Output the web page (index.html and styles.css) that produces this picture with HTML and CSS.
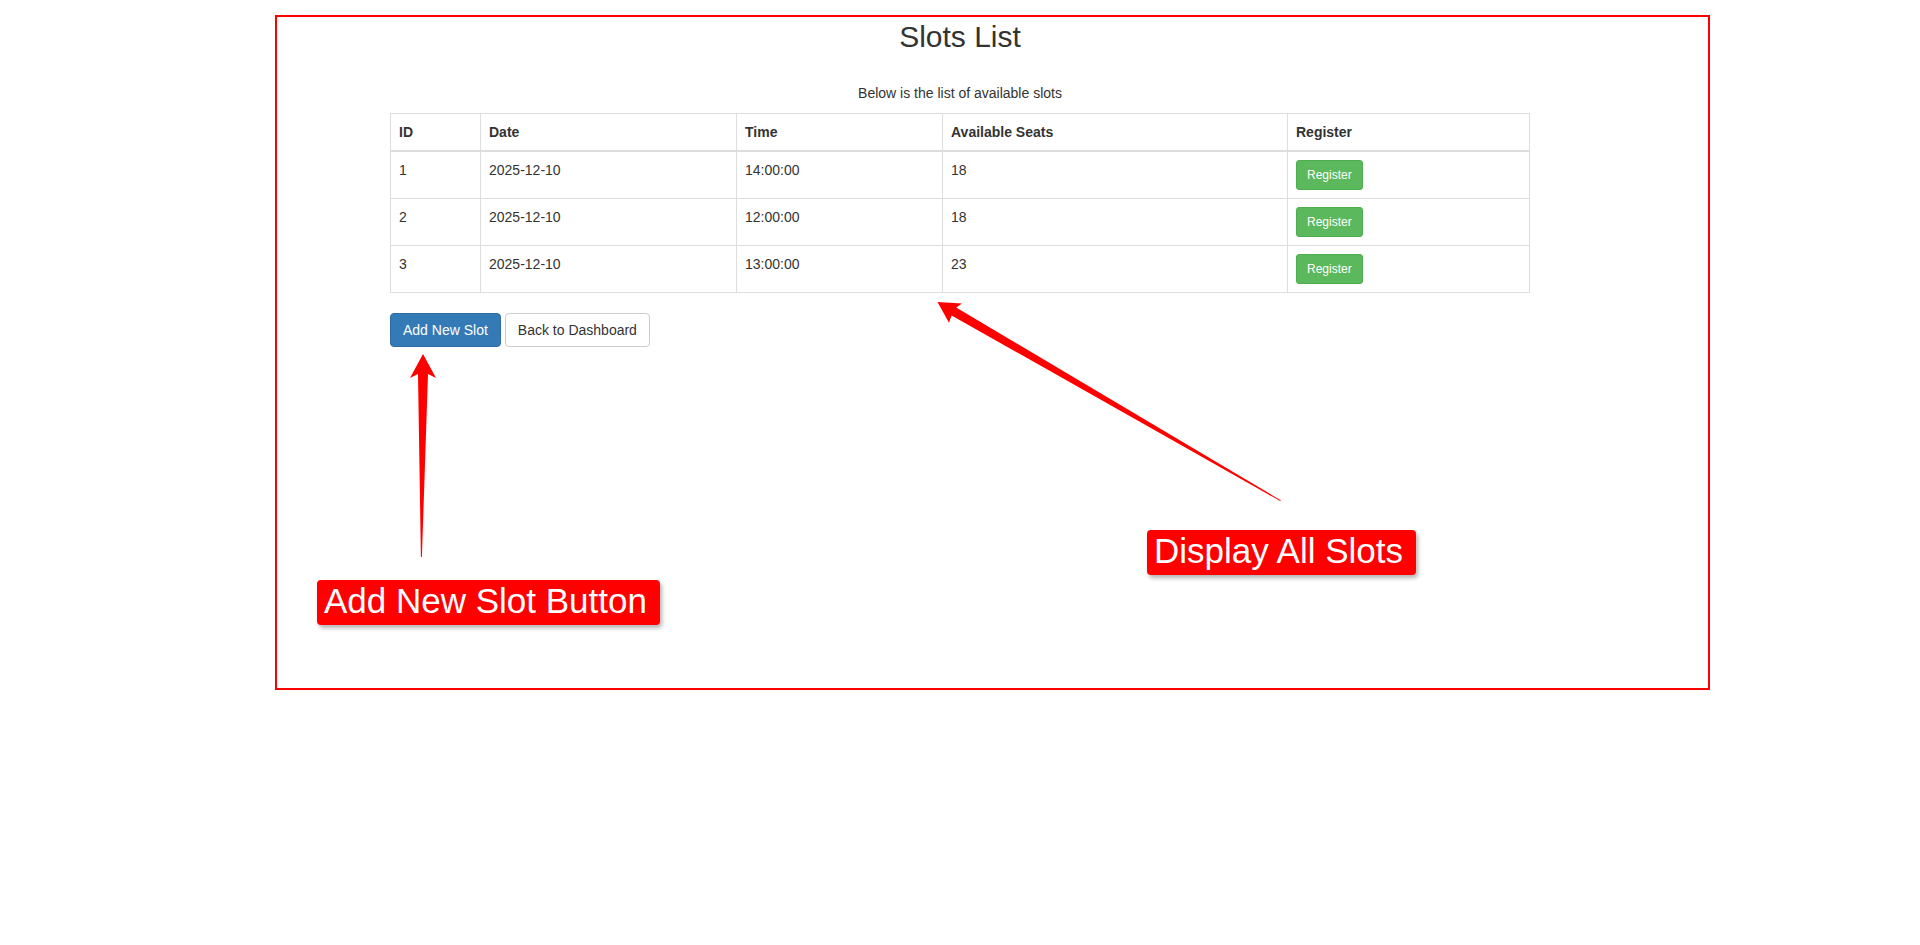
FILE: index.html
```html
<!DOCTYPE html>
<html lang="en">
<head>
<meta charset="utf-8">
<title>Slots List</title>
<link rel="stylesheet" href="styles.css">
</head>
<body>
<div class="container">
  <h2 class="title">Slots List</h2>
  <p class="intro">Below is the list of available slots</p>
  <table class="slots">
    <colgroup>
      <col class="c-id"><col class="c-date"><col class="c-time"><col class="c-seats"><col class="c-reg">
    </colgroup>
    <thead>
      <tr><th>ID</th><th>Date</th><th>Time</th><th>Available Seats</th><th>Register</th></tr>
    </thead>
    <tbody>
      <tr><td>1</td><td>2025-12-10</td><td>14:00:00</td><td>18</td><td><a class="btn btn-success btn-sm">Register</a></td></tr>
      <tr><td>2</td><td>2025-12-10</td><td>12:00:00</td><td>18</td><td><a class="btn btn-success btn-sm">Register</a></td></tr>
      <tr><td>3</td><td>2025-12-10</td><td>13:00:00</td><td>23</td><td><a class="btn btn-success btn-sm">Register</a></td></tr>
    </tbody>
  </table>
  <div class="actions">
    <a class="btn btn-primary">Add New Slot</a>
    <a class="btn btn-default">Back to Dashboard</a>
  </div>
</div>

<div class="annot-frame"></div>
<svg class="annot-arrows" width="1920" height="945" viewBox="0 0 1920 945">
  <polygon fill="#ff0000" points="423,354 436,378 428,374 421.9,557 420.9,557 418,374 410,378"/>
  <polygon fill="#ff0000" points="937.5,302 962,303.5 956.2,307.6 1280.8,500.3 1280.2,501.1 951.6,315.4 949,322.7"/>
</svg>
<div class="annot-label label-add">Add New Slot Button</div>
<div class="annot-label label-display">Display All Slots</div>
</body>
</html>
```

FILE: styles.css
```css
* {
  box-sizing: border-box;
}

html, body {
  margin: 0;
  padding: 0;
  background: #ffffff;
}

body {
  font-family: "Liberation Sans", Arial, Helvetica, sans-serif;
  font-size: 14px;
  line-height: 1.42857143;
  color: #333333;
}

.container {
  width: 1140px;
  margin: 0 auto;
}

.title {
  margin: 20px 0 30px;
  font-size: 30px;
  font-weight: 500;
  line-height: 1.1;
  text-align: center;
}

.intro {
  margin: 0 0 10px;
  text-align: center;
}

.slots {
  width: 1139px;
  table-layout: fixed;
  border-collapse: collapse;
  border-spacing: 0;
  border: 1px solid #dddddd;
  margin-bottom: 20px;
}

.c-id { width: 90px; }
.c-date { width: 256px; }
.c-time { width: 206px; }
.c-seats { width: 345px; }
.c-reg { width: 242px; }

.slots th,
.slots td {
  padding: 8px;
  border: 1px solid #dddddd;
  line-height: 1.42857143;
  text-align: left;
}

.slots th {
  font-weight: bold;
  vertical-align: bottom;
  border-bottom-width: 2px;
}

.slots td {
  vertical-align: top;
}

.actions {
  display: flex;
  gap: 4px;
}

.btn {
  display: inline-block;
  padding: 6px 12px;
  font-size: 14px;
  line-height: 1.42857143;
  border: 1px solid transparent;
  border-radius: 4px;
  text-align: center;
  white-space: nowrap;
  cursor: pointer;
  text-decoration: none;
}

.btn-sm {
  padding: 5px 10px;
  font-size: 12px;
  line-height: 1.5;
  border-radius: 3px;
}

.btn-primary {
  color: #ffffff;
  background-color: #337ab7;
  border-color: #2e6da4;
}

.btn-default {
  color: #333333;
  background-color: #ffffff;
  border-color: #cccccc;
}

.btn-success {
  color: #ffffff;
  background-color: #5cb85c;
  border-color: #4cae4c;
}

/* screenshot annotations layered over the page */
.annot-frame {
  position: absolute;
  left: 275px;
  top: 15px;
  width: 1435px;
  height: 675px;
  border: 2px solid #ff0000;
  pointer-events: none;
}

.annot-arrows {
  position: absolute;
  left: 0;
  top: 0;
  pointer-events: none;
}

.annot-label {
  position: absolute;
  height: 45px;
  padding: 0 13.5px 3px 7px;
  background: #ff0000;
  color: #ffffff;
  font-family: "Liberation Sans", Arial, sans-serif;
  font-size: 35px;
  line-height: 42px;
  white-space: nowrap;
  border-radius: 4px;
  box-shadow: 2px 3px 4px rgba(0, 0, 0, 0.3);
}

.label-add {
  left: 317px;
  top: 580px;
}

.label-display {
  left: 1147px;
  top: 530px;
}
```
